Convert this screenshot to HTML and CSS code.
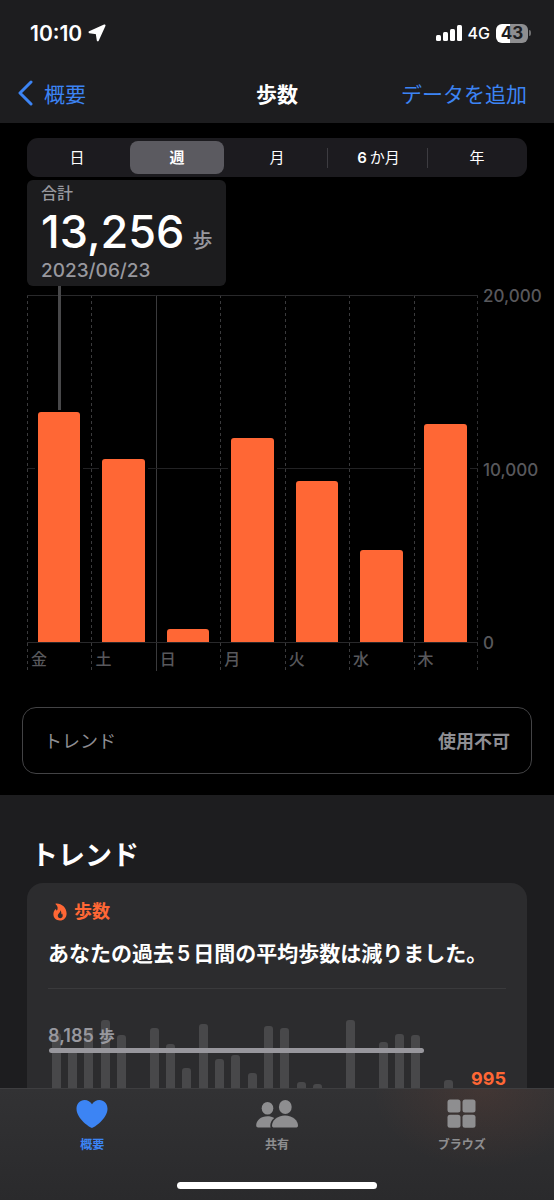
FILE: index.html
```html
<!DOCTYPE html>
<html lang="ja">
<head>
    <meta charset="UTF-8">
    <meta name="viewport" content="width=device-width, initial-scale=1.0">
    <title>歩数</title>
    <link rel="stylesheet" href="styles.css">
</head>
<body>
    <header class="top">
        <div class="status">
            <div class="status-side">
                <span class="time">10:10</span>
                <svg class="location" viewBox="0 0 18 18" aria-hidden="true">
                    <path d="M16.500 1.500 1.500 8.200 8.700 9.300 9.800 16.300z"/>
                </svg>
            </div>
            <div class="status-side">
                <svg class="signal" viewBox="0 0 26 16" aria-hidden="true">
                    <rect x="0" y="10" width="5" height="6" rx="1.500"/>
                    <rect x="7" y="7" width="5" height="9" rx="1.500"/>
                    <rect x="14" y="4" width="5" height="12" rx="1.500"/>
                    <rect x="21" y="0" width="5" height="16" rx="1.500"/>
                </svg>
                <span class="network">4G</span>
                <span class="battery">43</span>
            </div>
        </div>
        <nav class="navbar">
            <a class="back" href="#summary">
                <svg class="chevron" viewBox="0 0 16 26" aria-hidden="true">
                    <path d="M14 2 3 13l11 11"/>
                </svg>
                概要
            </a>
            <h1>歩数</h1>
            <a class="add" href="#add">データを追加</a>
        </nav>
    </header>

    <main>
        <section class="steps">
            <div class="segments">
                <button type="button">日</button>
                <button type="button" class="active" aria-pressed="true">週</button>
                <button type="button">月</button>
                <button type="button" class="divided"><span class="num">6</span>か月</button>
                <button type="button" class="divided">年</button>
            </div>

            <div class="callout">
                <div class="callout-label">合計</div>
                <div class="callout-value">13,256<span class="unit">歩</span></div>
                <div class="callout-date">2023/06/23</div>
            </div>

            <div class="chart">
                <div class="days">
                    <div class="day">
                        <div class="plot"><div class="marker"></div><div class="bar" style="height: 66.3%"></div></div>
                        <span>金</span>
                    </div>
                    <div class="day">
                        <div class="plot"><div class="bar" style="height: 52.8%"></div></div>
                        <span>土</span>
                    </div>
                    <div class="day week-start">
                        <div class="plot"><div class="bar" style="height: 3.7%"></div></div>
                        <span>日</span>
                    </div>
                    <div class="day">
                        <div class="plot"><div class="bar" style="height: 58.7%"></div></div>
                        <span>月</span>
                    </div>
                    <div class="day">
                        <div class="plot"><div class="bar" style="height: 46.3%"></div></div>
                        <span>火</span>
                    </div>
                    <div class="day">
                        <div class="plot"><div class="bar" style="height: 26.4%"></div></div>
                        <span>水</span>
                    </div>
                    <div class="day">
                        <div class="plot"><div class="bar" style="height: 62.9%"></div></div>
                        <span>木</span>
                    </div>
                </div>
                <div class="scale">
                    <span>20,000</span>
                    <span>10,000</span>
                    <span>0</span>
                </div>
            </div>

            <button type="button" class="trend-row">
                <span>トレンド</span>
                <strong>使用不可</strong>
            </button>
        </section>

        <section class="trends">
            <h2>トレンド</h2>
            <article class="card">
                <h3>
                    <svg class="flame" viewBox="0 0 14 18" aria-hidden="true">
                        <path fill-rule="evenodd" d="M3 .5C8.500.2 13.600 4.500 13.600 10.500c0 4.300-2.800 7-6.700 7-3.800 0-6.500-2.500-6.500-6.200 0-2.200.8-3.700 1.700-4.900.3-.4.8-.3 1 .1l.7 1.300C5.300 5.500 4.800 3 2.800 1.400 2.400 1 2.500.5 3 .5zM7.300 7.200c.4 2.300-2.500 3.300-2.500 5.600 0 1.500 1 2.400 2.400 2.400s2.500-1 2.500-2.500c0-.8-.2-1.500-.6-2.100-.2.500-.4.7-.8.9.2-1.700-.1-3.300-1-4.300z"/>
                    </svg>
                    歩数
                </h3>
                <p class="message">あなたの過去<span class="num">5</span>日間の平均歩数は減りました。</p>
                <div class="history">
                    <div class="history-bars">
                        <i style="height: 91%"></i>
                        <i style="height: 78%"></i>
                        <i style="height: 94%"></i>
                        <i style="height: 100%"></i>
                        <i style="height: 89%"></i>
                        <i style="height: 0%"></i>
                        <i style="height: 94%"></i>
                        <i style="height: 83%"></i>
                        <i style="height: 66%"></i>
                        <i style="height: 97%"></i>
                        <i style="height: 72%"></i>
                        <i style="height: 75%"></i>
                        <i style="height: 62%"></i>
                        <i style="height: 96%"></i>
                        <i style="height: 94%"></i>
                        <i style="height: 56%"></i>
                        <i style="height: 54%"></i>
                        <i style="height: 0%"></i>
                        <i style="height: 100%"></i>
                        <i style="height: 0%"></i>
                        <i style="height: 84%"></i>
                        <i style="height: 90%"></i>
                        <i style="height: 89%"></i>
                        <i style="height: 0%"></i>
                        <i style="height: 57%"></i>
                        <i style="height: 0%"></i>
                        <i style="height: 0%"></i>
                        <i style="height: 0%"></i>
                    </div>
                    <div class="average">8,185<span class="average-unit">歩</span></div>
                    <div class="recent">995</div>
                </div>
            </article>
        </section>
    </main>

    <footer class="tabbar">
        <nav class="tabs">
            <a class="tab current" href="#summary">
                <svg viewBox="0 0 32 30" aria-hidden="true">
                    <path d="M16 29C14.500 29 .5 20 .5 9.800.5 4.700 4 1 8.600 1c3.200 0 5.800 1.700 7.400 4.300C17.600 2.700 20.200 1 23.400 1 28 1 31.500 4.700 31.500 9.800 31.500 20 17.500 29 16 29z"/>
                </svg>
                概要
            </a>
            <a class="tab" href="#sharing">
                <svg class="people" viewBox="0 0 42 30" aria-hidden="true">
                    <ellipse cx="11.500" cy="9.300" rx="5.800" ry="6.300"/>
                    <path d="M2.200 28.500C.9 28.500.2 27.800.2 26.500.2 21.500 4.800 17.200 11.500 17.200c2.500 0 4.800.6 6.700 1.800-2.800 2.300-4 5-3.900 7.700 0 .7.1 1.300.4 1.800z"/>
                    <ellipse cx="29.300" cy="8" rx="6.400" ry="6.900"/>
                    <path d="M18.300 28.500c-1.500 0-2.300-.6-2.300-2 0-4.700 5-10 13-10s13 5.300 13 10c0 1.400-.8 2-2.300 2z"/>
                </svg>
                共有
            </a>
            <a class="tab" href="#browse">
                <svg viewBox="0 0 32 30" aria-hidden="true">
                    <rect x="1.500" y="0.500" width="13" height="13" rx="2.500"/>
                    <rect x="16.500" y="0.500" width="13" height="13" rx="2.500"/>
                    <rect x="1.500" y="15.700" width="13" height="13" rx="2.500"/>
                    <rect x="16.500" y="15.700" width="13" height="13" rx="2.500"/>
                </svg>
                ブラウズ
            </a>
        </nav>
        <div class="home"></div>
    </footer>
</body>
</html>
```
FILE: styles.css
```css
* {
    box-sizing: border-box;
}

body {
    display: flex;
    flex-direction: column;
    height: 100vh;
    margin: 0;
    background: #000;
    color: #fff;
    font-family: Inter, "Noto Sans CJK JP", sans-serif;
}

h1, h2, h3, p {
    margin: 0;
}

a {
    color: #3c84f4;
    text-decoration: none;
}

button {
    padding: 0;
    border: none;
    background: none;
    color: inherit;
    font-family: inherit;
}

/* status bar and navigation */
.top {
    background: #1d1d1f;
}

.status {
    display: flex;
    justify-content: space-between;
    height: 66px;
    padding: 0 24px 0 30px;
}

.status-side {
    display: flex;
    align-items: center;
    gap: 6px;
}

.time {
    font-size: 21px;
    font-weight: 600;
}

.location {
    width: 18px;
    height: 18px;
    fill: #fff;
    stroke: #fff;
    stroke-width: 2;
    stroke-linejoin: round;
}

.signal {
    width: 26px;
    height: 16px;
    fill: #fff;
}

.network {
    font-size: 16px;
    font-weight: 500;
}

.battery {
    position: relative;
    width: 32px;
    margin-right: 2px;
    border-radius: 6px;
    background: linear-gradient(to right, #fff 43%, #8e8e90 43%);
    color: #1d1d1f;
    font-size: 17px;
    font-weight: 700;
    line-height: 19px;
    text-align: center;
}

.battery::after {
    content: "";
    position: absolute;
    top: 6px;
    right: -3px;
    width: 2px;
    height: 6px;
    border-radius: 0 2px 2px 0;
    background: #6e6e70;
}

.navbar {
    display: grid;
    grid-template-columns: 1fr auto 1fr;
    align-items: center;
    height: 57px;
    padding: 0 27px 4px;
    font-size: 21px;
}

.navbar h1 {
    font-size: 21px;
    font-weight: 700;
}

.back {
    display: flex;
    align-items: center;
    gap: 11px;
    margin-left: -10px;
}

.chevron {
    width: 16px;
    height: 26px;
    fill: none;
    stroke: currentColor;
    stroke-width: 3;
    stroke-linecap: round;
    stroke-linejoin: round;
}

.add {
    justify-self: end;
}

main {
    flex: 1;
    min-height: 0;
    overflow-y: auto;
    scrollbar-width: none;
}

.steps {
    padding: 15px 22px 21px;
}

.segments {
    display: grid;
    grid-template-columns: repeat(5, 1fr);
    height: 39px;
    margin: 0 5px;
    border-radius: 11px;
    background: #1c1b1f;
}

.segments button {
    margin: 3px;
    padding-bottom: 2px;
    border-radius: 8px;
    font-size: 15px;
    font-weight: 400;
}

.segments .active {
    background: #5b5a60;
    font-weight: 700;
}

.segments .divided {
    margin-left: 0;
    padding-left: 3px;
    border-radius: 0;
    background: linear-gradient(#3d3c41, #3d3c41) left / 1px 20px no-repeat;
}

.num {
    margin: 0 3px;
    font-weight: 600;
}

.callout {
    width: fit-content;
    height: 106px;
    margin: 3px 5px 9px;
    padding: 2px 14px 0;
    border-radius: 6px;
    background: #1c1c1e;
    color: #98989e;
    font-weight: 500;
}

.callout-label {
    font-size: 16px;
    line-height: 22px;
}

.callout-value {
    display: flex;
    align-items: baseline;
    height: 55px;
    color: #fff;
    font-size: 45px;
    line-height: 56px;
}

.unit {
    margin-left: 8px;
    color: #98989e;
    font-size: 20px;
    line-height: 20px;
}

.callout-date {
    font-size: 19px;
    line-height: 24px;
}

/* weekly chart */
.chart {
    display: flex;
    gap: 5px;
    margin-left: 5px;
    color: #58585c;
}

.days {
    display: flex;
    width: 451px;
    flex-shrink: 1;
    background: repeating-linear-gradient(#303032 0 3px, transparent 3px 6px) right / 1px 100% no-repeat;
}

.day {
    flex: 1;
    background: repeating-linear-gradient(#3a3a3c 0 3px, transparent 3px 6px) left / 1px 100% no-repeat;
}

.week-start {
    background: linear-gradient(#3a3a3c, #3a3a3c) left / 1px 100% no-repeat;
}

.day span {
    display: block;
    height: 29px;
    padding-left: 4px;
    font-size: 16px;
    font-weight: 500;
    line-height: 34px;
}

.plot {
    display: flex;
    flex-direction: column;
    align-items: center;
    justify-content: flex-end;
    height: 347px;
    background:
        linear-gradient(#29292b, #29292b) top / 100% 1px no-repeat,
        linear-gradient(#222224, #222224) center / 100% 1px no-repeat;
    box-shadow: 0 1px #29292b;
}

.marker {
    flex: 1;
    width: 3px;
    margin: -9px 0 2px;
    background: #48484a;
}

.bar {
    flex-shrink: 0;
    width: 66%;
    border-radius: 3px 3px 0 0;
    background: #ff6735;
    box-shadow: -3px 0 #000, 3px 0 #000;
}

.scale {
    display: flex;
    flex-direction: column;
    justify-content: space-between;
    height: 367px;
    margin: -9px -22px 0 0;
    font-size: 17px;
    font-weight: 500;
    line-height: 20px;
}

.trend-row {
    display: flex;
    justify-content: space-between;
    align-items: center;
    width: 100%;
    height: 67px;
    margin-top: 36px;
    padding: 0 21px 2px;
    border: 1px solid #434345;
    border-radius: 14px;
    color: #8e8e93;
    font-size: 18px;
}

/* trends card */
.trends {
    padding: 41px 27px 0;
    background: #1d1d1f;
}

.trends h2 {
    margin-bottom: 7px;
    padding-left: 4px;
    font-size: 27px;
    font-weight: 700;
    line-height: 40px;
}

.card {
    padding: 16px 21px 24px;
    border-radius: 16px 16px 0 0;
    background: #2c2c2e;
}

.card h3 {
    display: flex;
    align-items: center;
    gap: 7px;
    padding-left: 5px;
    color: #ff6735;
    font-size: 18px;
    font-weight: 700;
    line-height: 26px;
}

.flame {
    width: 14px;
    height: 18px;
    fill: currentColor;
}

.message {
    margin-top: 14px;
    padding-bottom: 19px;
    border-bottom: 1px solid #3a3a3c;
    font-size: 21px;
    font-weight: 600;
    line-height: 30px;
}

.history {
    position: relative;
    margin-top: 31px;
}

.history-bars {
    display: flex;
    align-items: flex-end;
    justify-content: space-around;
    height: 140px;
}

.history-bars i {
    width: 9px;
    border-radius: 3px 3px 0 0;
    background: #48484a;
}

/* average line with its value on top */
.average {
    position: absolute;
    top: 4px;
    left: 0;
    width: 82%;
    padding-bottom: 5px;
    color: #98989e;
    font-size: 18px;
    font-weight: 600;
    line-height: 24px;
}

.average::after {
    content: "";
    position: absolute;
    left: 1px;
    right: 0;
    bottom: 0;
    height: 5px;
    border-radius: 3px;
    background: #98979d;
}

.average-unit {
    margin-left: 5px;
    font-size: 16px;
}

.recent {
    position: absolute;
    top: 51px;
    right: 0;
    color: #ff6735;
    font-size: 18px;
    font-weight: 700;
    line-height: 16px;
}

/* tab bar */
.tabbar {
    height: 112px;
    border-top: 1px solid #3e3e40;
    background:
        radial-gradient(110px 80px at 87% 0, rgba(255, 103, 53, 0.08), transparent),
        linear-gradient(#323234, #2a2a2c);
}

.tabs {
    display: flex;
    padding-top: 10px;
}

.tab {
    display: flex;
    flex: 1;
    flex-direction: column;
    align-items: center;
    gap: 7px;
    color: #8e8e90;
    font-size: 12px;
    font-weight: 600;
    line-height: 18px;
}

.tab svg {
    width: 32px;
    height: 30px;
    fill: currentColor;
}

.tab .people {
    width: 42px;
}

.tab.current {
    color: #3c84f4;
}

.home {
    width: 36%;
    height: 7px;
    margin: 28px auto 0;
    border-radius: 4px;
    background: #fff;
}
```
